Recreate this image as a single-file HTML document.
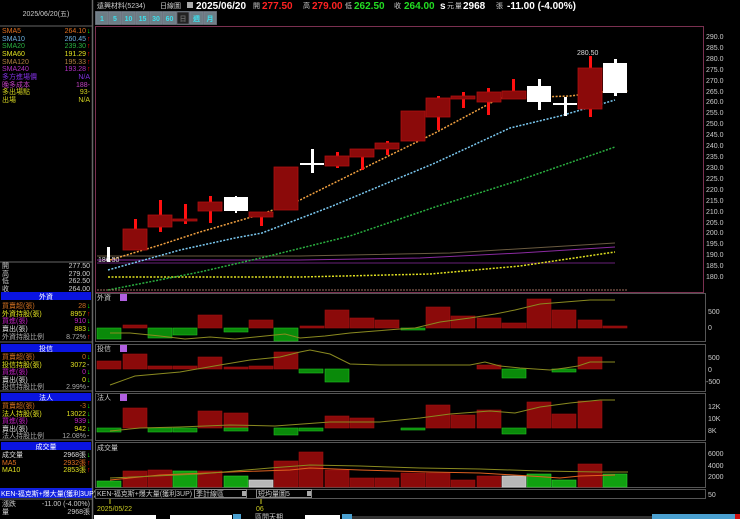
<!DOCTYPE html>
<html><head><meta charset="utf-8"><style>
html,body{margin:0;padding:0;background:#000;width:740px;height:519px;overflow:hidden}
svg{display:block}
text{font-family:"Liberation Sans","Noto Sans CJK TC",sans-serif;font-size:7px}
.b{font-weight:bold;font-size:10px}
</style></head><body>
<svg width="740" height="519" viewBox="0 0 740 519" xmlns="http://www.w3.org/2000/svg">
<rect width="740" height="519" fill="#000"/>
<!-- left panel -->
<line x1="92.5" y1="0" x2="92.5" y2="519" stroke="#666" stroke-width="1.5"/>
<line x1="0" y1="26" x2="92" y2="26" stroke="#666"/>
<text x="46" y="16" fill="#ccc" text-anchor="middle">2025/06/20(五)</text>
<g font-size="7">
<text x="2" y="33" fill="#e07020">SMA5</text><text x="86" y="33" fill="#e07020" text-anchor="end">264.10</text><text x="87" y="33" fill="#0f0">↓</text>
<text x="2" y="41" fill="#6cb0e0">SMA10</text><text x="86" y="41" fill="#6cb0e0" text-anchor="end">260.45</text><text x="87" y="41" fill="#f00">↑</text>
<text x="2" y="48" fill="#2ab040">SMA20</text><text x="86" y="48" fill="#2ab040" text-anchor="end">239.30</text><text x="87" y="48" fill="#f00">↑</text>
<text x="2" y="56" fill="#e0e020">SMA60</text><text x="86" y="56" fill="#e0e020" text-anchor="end">191.29</text><text x="87" y="56" fill="#f00">↑</text>
<text x="2" y="64" fill="#b08040">SMA120</text><text x="86" y="64" fill="#b08040" text-anchor="end">195.33</text><text x="87" y="64" fill="#f00">↑</text>
<text x="2" y="71" fill="#b030c0">SMA240</text><text x="86" y="71" fill="#b030c0" text-anchor="end">193.28</text><text x="87" y="71" fill="#f00">↑</text>
<text x="2" y="79" fill="#8030e0">多方進場價</text><text x="90" y="79" fill="#8030e0" text-anchor="end">N/A</text>
<text x="2" y="87" fill="#c040c0">晚多成本</text><text x="90" y="87" fill="#c040c0" text-anchor="end">188-</text>
<text x="2" y="94" fill="#d0d020">多出場點</text><text x="90" y="94" fill="#d0d020" text-anchor="end">93-</text>
<text x="2" y="102" fill="#d0d020">出場</text><text x="90" y="102" fill="#d0d020" text-anchor="end">N/A</text>
</g>
<line x1="0" y1="262" x2="92" y2="262" stroke="#666"/>
<g fill="#ccc">
<text x="2" y="268">開</text><text x="90" y="268" text-anchor="end">277.50</text>
<text x="2" y="276">高</text><text x="90" y="276" text-anchor="end">279.00</text>
<text x="2" y="283">低</text><text x="90" y="283" text-anchor="end">262.50</text>
<text x="2" y="291">收</text><text x="90" y="291" text-anchor="end">264.00</text>
</g>
<rect x="1" y="292" width="90" height="8" fill="#0a14e0"/><text x="46" y="299" fill="#fff" text-anchor="middle">外資</text>
<text x="2" y="308" fill="#d07020">買賣超(張)</text><text x="86" y="308" fill="#d07020" text-anchor="end">28</text><text x="87" y="308" fill="#0f0">↓</text>
<text x="2" y="316" fill="#e0e020">外資持股(張)</text><text x="86" y="316" fill="#e0e020" text-anchor="end">8957</text><text x="87" y="316" fill="#f00">↑</text>
<text x="2" y="323" fill="#c020c0">買進(張)</text><text x="86" y="323" fill="#c020c0" text-anchor="end">910</text><text x="87" y="323" fill="#0f0">↓</text>
<text x="2" y="331" fill="#ddd">賣出(張)</text><text x="86" y="331" fill="#e0e020" text-anchor="end">883</text><text x="87" y="331" fill="#0f0">↓</text>
<text x="2" y="339" fill="#aaa">外資持股比例</text><text x="86" y="339" fill="#aaa" text-anchor="end">8.72%</text><text x="87" y="339" fill="#f00">↑</text>
<line x1="0" y1="342" x2="92" y2="342" stroke="#666"/>
<rect x="1" y="344" width="90" height="8" fill="#0a14e0"/><text x="46" y="351" fill="#fff" text-anchor="middle">投信</text>
<text x="2" y="359" fill="#d07020">買賣超(張)</text><text x="86" y="359" fill="#d07020" text-anchor="end">0</text><text x="87" y="359" fill="#0f0">↓</text>
<text x="2" y="367" fill="#e0e020">投信持股(張)</text><text x="86" y="367" fill="#e0e020" text-anchor="end">3072</text><text x="87" y="367" fill="#ccc">-</text>
<text x="2" y="374" fill="#c020c0">買進(張)</text><text x="86" y="374" fill="#c020c0" text-anchor="end">0</text><text x="87" y="374" fill="#0f0">↓</text>
<text x="2" y="382" fill="#ddd">賣出(張)</text><text x="86" y="382" fill="#e0e020" text-anchor="end">0</text><text x="87" y="382" fill="#0f0">↓</text>
<text x="2" y="389" fill="#aaa">投信持股比例</text><text x="86" y="389" fill="#aaa" text-anchor="end">2.99%</text><text x="87" y="389" fill="#ccc">-</text>
<line x1="0" y1="391" x2="92" y2="391" stroke="#666"/>
<rect x="1" y="393" width="90" height="8" fill="#0a14e0"/><text x="46" y="400" fill="#fff" text-anchor="middle">法人</text>
<text x="2" y="408" fill="#d07020">買賣超(張)</text><text x="86" y="408" fill="#d07020" text-anchor="end">-3</text><text x="87" y="408" fill="#0f0">↓</text>
<text x="2" y="416" fill="#e0e020">法人持股(張)</text><text x="86" y="416" fill="#e0e020" text-anchor="end">13022</text><text x="87" y="416" fill="#0f0">↓</text>
<text x="2" y="423" fill="#c020c0">買進(張)</text><text x="86" y="423" fill="#c020c0" text-anchor="end">939</text><text x="87" y="423" fill="#0f0">↓</text>
<text x="2" y="431" fill="#ddd">賣出(張)</text><text x="86" y="431" fill="#e0e020" text-anchor="end">942</text><text x="87" y="431" fill="#0f0">↓</text>
<text x="2" y="438" fill="#aaa">法人持股比例</text><text x="86" y="438" fill="#aaa" text-anchor="end">12.08%</text><text x="87" y="438" fill="#ccc">-</text>
<line x1="0" y1="440" x2="92" y2="440" stroke="#666"/>
<rect x="1" y="442" width="90" height="8" fill="#0a14e0"/><text x="46" y="449" fill="#fff" text-anchor="middle">成交量</text>
<text x="2" y="457" fill="#ddd">成交量</text><text x="86" y="457" fill="#ddd" text-anchor="end">2968張</text><text x="87" y="457" fill="#0f0">↓</text>
<text x="2" y="465" fill="#e07020">MA5</text><text x="86" y="465" fill="#e07020" text-anchor="end">2932張</text><text x="87" y="465" fill="#f00">↑</text>
<text x="2" y="472" fill="#e0e020">MA10</text><text x="86" y="472" fill="#e0e020" text-anchor="end">2853張</text><text x="87" y="472" fill="#f00">↑</text>
<rect x="0" y="488" width="92" height="10" fill="#1020e0"/><text x="1" y="496" fill="#fff">KEN-福克斯+爆大量(獲利3UP)</text>
<line x1="0" y1="499" x2="92" y2="499" stroke="#666"/>
<text x="2" y="506" fill="#ccc">漲跌</text><text x="90" y="506" fill="#ccc" text-anchor="end">-11.00 (-4.00%)</text>
<text x="2" y="514" fill="#ccc">量</text><text x="90" y="514" fill="#ccc" text-anchor="end">2968張</text>

<!-- header -->
<text x="97" y="8" fill="#ccc">遠興材料(5234)</text>
<text x="160" y="8" fill="#ccc">日線圖</text>
<rect x="187" y="2" width="6" height="6" fill="#aaa"/>
<text x="196" y="9" class="b" fill="#fff">2025/06/20</text>
<text x="253" y="8" fill="#ccc">開</text><text x="262" y="9" class="b" fill="#f22">277.50</text>
<text x="303" y="8" fill="#ccc">高</text><text x="312" y="9" class="b" fill="#f22">279.00</text>
<text x="345" y="8" fill="#ccc">低</text><text x="354" y="9" class="b" fill="#2d2">262.50</text>
<text x="394" y="8" fill="#ccc">收</text><text x="404" y="9" class="b" fill="#2d2">264.00</text>
<text x="440" y="9" class="b" fill="#fff" font-size="8">s</text><text x="447" y="8" fill="#ccc">元</text>
<text x="455" y="8" fill="#ccc">量</text><text x="463" y="9" class="b" fill="#fff">2968</text>
<text x="496" y="8" fill="#ccc">張</text><text x="507" y="9" class="b" fill="#fff">-11.00 (-4.00%)</text>
<!-- buttons -->
<rect x="95" y="11" width="122" height="14" fill="#556066"/>
<g fill="#6c7c84" stroke="#889" stroke-width="0.5">
<rect x="96" y="12" width="12" height="12"/><rect x="109" y="12" width="12" height="12"/><rect x="122" y="12" width="13" height="12"/><rect x="136" y="12" width="13" height="12"/><rect x="150" y="12" width="12" height="12"/><rect x="163" y="12" width="13" height="12"/><rect x="177" y="12" width="12" height="12" fill="#222"/><rect x="190" y="12" width="13" height="12"/><rect x="204" y="12" width="12" height="12"/>
</g>
<g fill="#3ee0ee" font-size="7" text-anchor="middle" font-weight="bold">
<text x="102" y="21">1</text><text x="115" y="21">5</text><text x="128.5" y="21">10</text><text x="142.5" y="21">15</text><text x="156" y="21">30</text><text x="169.5" y="21">60</text><text x="183" y="21" fill="#666">日</text><text x="196.5" y="21">週</text><text x="210" y="21">月</text>
</g>

<!-- main chart frame -->
<rect x="95.5" y="26.5" width="608" height="266" fill="none" stroke="#7a3050"/>
<g fill="#ccc" font-size="7.5">
<text x="706" y="39">290.0</text><text x="706" y="50">285.0</text><text x="706" y="61">280.0</text><text x="706" y="72">275.0</text><text x="706" y="83">270.0</text><text x="706" y="94">265.0</text><text x="706" y="104">260.0</text><text x="706" y="115">255.0</text><text x="706" y="126">250.0</text><text x="706" y="137">245.0</text><text x="706" y="148">240.0</text><text x="706" y="159">235.0</text><text x="706" y="170">230.0</text><text x="706" y="181">225.0</text><text x="706" y="192">220.0</text><text x="706" y="203">215.0</text><text x="706" y="214">210.0</text><text x="706" y="225">205.0</text><text x="706" y="235">200.0</text><text x="706" y="246">195.0</text><text x="706" y="257">190.0</text><text x="706" y="268">185.0</text><text x="706" y="279">180.0</text>
</g>
<!-- long MAs -->
<polyline points="97,256 300,256 450,253 615,243" fill="none" stroke="#6a5a40" stroke-width="1"/>
<polyline points="97,260 300,260 420,258 520,253 615,247" fill="none" stroke="#8a2aa0" stroke-width="1"/>
<polyline points="97,263 615,263" fill="none" stroke="#8a2aa0" stroke-width="0.8"/>
<polyline points="108,277 300,277 430,274 520,266 615,252" fill="none" stroke="#e0e020" stroke-width="1.5" stroke-dasharray="2,1.5"/>
<polyline points="108,290 200,272 265,257 350,236 435,207 520,180 615,147" fill="none" stroke="#2ab040" stroke-width="1.5" stroke-dasharray="2,1.5"/>
<polyline points="108,270 180,250 235,238 262,233 330,207 435,163 510,128 560,116 615,100" fill="none" stroke="#7ac8f0" stroke-width="1.5" stroke-dasharray="2,1.5"/>
<polyline points="110,260 160,245 200,232 262,214 300,200 360,170 435,133 500,98 540,97 570,96 600,92 628,91" fill="none" stroke="#f0a040" stroke-width="1.5" stroke-dasharray="2,1.5"/>
<line x1="97" y1="290" x2="628" y2="290" stroke="#a07060" stroke-width="1" stroke-dasharray="2,1"/>
<!-- candles -->
<g fill="#ff1010">
<rect x="134" y="219" width="3" height="31"/><rect x="159" y="200" width="3" height="32"/><rect x="184" y="204" width="3" height="20"/><rect x="209" y="196" width="3" height="27"/><rect x="260" y="212" width="3" height="14"/><rect x="336" y="152" width="3" height="16"/><rect x="361" y="149" width="3" height="21"/><rect x="386" y="141" width="3" height="14"/><rect x="437" y="96" width="3" height="34"/><rect x="462" y="92" width="3" height="16"/><rect x="487" y="88" width="3" height="27"/><rect x="512" y="79" width="3" height="20"/><rect x="589" y="56" width="3" height="61"/>
</g>
<g fill="#8b0a0a" stroke="#b01010" stroke-width="0.8">
<rect x="123" y="229" width="24" height="21"/><rect x="148" y="215" width="24" height="12"/><rect x="173" y="219" width="24" height="2"/><rect x="198" y="202" width="24" height="9"/><rect x="249" y="212" width="24" height="5"/><rect x="274" y="167" width="24" height="43"/><rect x="325" y="156" width="24" height="10"/><rect x="350" y="149" width="24" height="8"/><rect x="375" y="143" width="24" height="6"/><rect x="401" y="111" width="24" height="30"/><rect x="426" y="98" width="24" height="19"/><rect x="451" y="96" width="24" height="3"/><rect x="477" y="92" width="24" height="10"/><rect x="502" y="91" width="24" height="8"/><rect x="578" y="68" width="24" height="41"/>
</g>
<g fill="#fff">
<rect x="107" y="247" width="3" height="15"/>
<rect x="224" y="197" width="24" height="14"/><rect x="235" y="196" width="2" height="17"/>
<rect x="300" y="163" width="24" height="2"/><rect x="311" y="149" width="3" height="24"/>
<rect x="527" y="86" width="24" height="16"/><rect x="538" y="79" width="3" height="31"/>
<rect x="553" y="103" width="24" height="2"/><rect x="564" y="97" width="3" height="19"/>
<rect x="603" y="63" width="24" height="30"/><rect x="614" y="59" width="3" height="37"/>
</g>
<text x="577" y="55" fill="#ddd" font-size="7.5">280.50</text>
<text x="98" y="262" fill="#ddd" font-size="7.5">186.50</text>

<!-- sub panel frames -->
<g fill="none" stroke="#555">
<rect x="95.5" y="293.5" width="610" height="48"/>
<rect x="95.5" y="344.5" width="610" height="47"/>
<rect x="95.5" y="393.5" width="610" height="47"/>
<rect x="95.5" y="442.5" width="610" height="45"/>
<rect x="95.5" y="489.5" width="610" height="9"/>
</g>
<g fill="#ccc">
<text x="97" y="300">外資</text><text x="97" y="351">投信</text><text x="97" y="400">法人</text><text x="97" y="450">成交量</text>
</g>
<g fill="#b060e0"><rect x="120" y="294" width="7" height="7"/><rect x="120" y="345" width="7" height="7"/><rect x="120" y="394" width="7" height="7"/></g>
<g fill="#ccc" font-size="7.5">
<text x="708" y="314">500</text><text x="708" y="330">0</text>
<text x="708" y="360">500</text><text x="708" y="372">0</text><text x="706" y="384">-500</text>
<text x="708" y="409">12K</text><text x="708" y="421">10K</text><text x="708" y="433">8K</text>
<text x="708" y="456">6000</text><text x="708" y="468">4000</text><text x="708" y="479">2000</text>
<text x="708" y="497">50</text>
</g>
<!-- 外資 -->
<g fill="#8b0a0a" stroke="#a01010" stroke-width="0.6">
<rect x="123" y="325" width="24" height="3"/><rect x="198" y="315" width="24" height="13"/><rect x="249" y="320" width="24" height="8"/><rect x="300" y="326" width="24" height="2"/><rect x="325" y="310" width="24" height="18"/><rect x="350" y="318" width="24" height="10"/><rect x="375" y="320" width="24" height="8"/><rect x="426" y="307" width="24" height="21"/><rect x="451" y="316" width="24" height="12"/><rect x="477" y="318" width="24" height="10"/><rect x="502" y="323" width="24" height="5"/><rect x="527" y="299" width="24" height="29"/><rect x="552" y="310" width="24" height="18"/><rect x="578" y="320" width="24" height="8"/><rect x="603" y="326" width="24" height="2"/>
</g>
<g fill="#0a8a0a" stroke="#20c020" stroke-width="0.6">
<rect x="97" y="328" width="24" height="11"/><rect x="148" y="328" width="24" height="10"/><rect x="173" y="328" width="24" height="7"/><rect x="224" y="328" width="24" height="4"/><rect x="274" y="328" width="24" height="13"/><rect x="401" y="328" width="24" height="2"/>
</g>
<polyline points="110,333 130,333 160,336 185,339 210,337 235,339 265,336 285,334 300,338 325,336 350,333 375,331 400,329 415,328 440,322 470,318 495,314 515,310 540,304 565,302 590,300 615,300" fill="none" stroke="#8a8a20" stroke-width="1"/>
<!-- 投信 -->
<g fill="#8b0a0a" stroke="#a01010" stroke-width="0.6">
<rect x="97" y="361" width="24" height="8"/><rect x="123" y="354" width="24" height="15"/><rect x="148" y="366" width="24" height="3"/><rect x="173" y="366" width="24" height="3"/><rect x="198" y="357" width="24" height="12"/><rect x="224" y="367" width="24" height="2"/><rect x="249" y="366" width="24" height="3"/><rect x="274" y="352" width="24" height="17"/><rect x="477" y="365" width="24" height="4"/><rect x="578" y="357" width="24" height="12"/>
</g>
<g fill="#0a8a0a" stroke="#20c020" stroke-width="0.6">
<rect x="299" y="369" width="24" height="4"/><rect x="325" y="369" width="24" height="13"/><rect x="502" y="369" width="24" height="9"/><rect x="552" y="369" width="24" height="3"/>
</g>
<polyline points="110,385 135,376 180,372 220,365 250,360 280,357 300,352 310,350 330,354 350,364 380,365 470,365 485,362 500,366 520,368 550,370 565,368 578,366 590,362 615,362" fill="none" stroke="#8a8a20" stroke-width="1"/>
<!-- 法人 -->
<g fill="#8b0a0a" stroke="#a01010" stroke-width="0.6">
<rect x="123" y="408" width="24" height="20"/><rect x="198" y="411" width="24" height="17"/><rect x="224" y="413" width="24" height="15"/><rect x="325" y="416" width="24" height="12"/><rect x="350" y="418" width="24" height="10"/><rect x="426" y="405" width="24" height="23"/><rect x="451" y="415" width="24" height="13"/><rect x="477" y="410" width="24" height="18"/><rect x="527" y="402" width="24" height="26"/><rect x="552" y="414" width="24" height="14"/><rect x="578" y="401" width="24" height="27"/>
</g>
<g fill="#0a8a0a" stroke="#20c020" stroke-width="0.6">
<rect x="97" y="428" width="24" height="4"/><rect x="148" y="428" width="24" height="4"/><rect x="173" y="428" width="24" height="4"/><rect x="224" y="428" width="24" height="3"/><rect x="274" y="428" width="24" height="7"/><rect x="299" y="428" width="24" height="3"/><rect x="401" y="428" width="24" height="2"/><rect x="502" y="428" width="24" height="6"/>
</g>
<polyline points="110,431 140,428 180,427 230,425 275,426 330,422 380,422 420,418 450,414 490,411 515,413 540,407 570,403 600,400 615,400" fill="none" stroke="#8a8a20" stroke-width="1"/>
<!-- 成交量 -->
<g fill="#8b0a0a" stroke="#a01010" stroke-width="0.6">
<rect x="123" y="471" width="24" height="16"/><rect x="148" y="470" width="24" height="17"/><rect x="198" y="471" width="24" height="16"/><rect x="274" y="461" width="24" height="26"/><rect x="299" y="452" width="24" height="35"/><rect x="325" y="470" width="24" height="17"/><rect x="350" y="478" width="24" height="9"/><rect x="375" y="478" width="24" height="9"/><rect x="401" y="473" width="24" height="14"/><rect x="426" y="473" width="24" height="14"/><rect x="451" y="480" width="24" height="7"/><rect x="477" y="476" width="24" height="11"/><rect x="578" y="464" width="24" height="23"/>
</g>
<g fill="#10a010" stroke="#30d030" stroke-width="0.6">
<rect x="97" y="481" width="24" height="6"/><rect x="173" y="471" width="24" height="16"/><rect x="224" y="476" width="24" height="11"/><rect x="527" y="474" width="24" height="13"/><rect x="552" y="480" width="24" height="7"/><rect x="603" y="474" width="24" height="13"/>
</g>
<g fill="#b8b8b8" stroke="#ddd" stroke-width="0.6"><rect x="249" y="480" width="24" height="7"/><rect x="502" y="476" width="24" height="11"/></g>
<polyline points="110,480 160,475 230,472 290,470 310,468 360,470 430,472 480,473 530,476 560,478 580,476 615,475" fill="none" stroke="#e06020" stroke-width="1"/>
<polyline points="110,478 200,474 270,468 310,465 360,466 420,468 480,469 540,471 600,472 628,472" fill="none" stroke="#8a8a20" stroke-width="1"/>
<!-- selector row -->
<text x="97" y="496" fill="#ccc">KEN-福克斯+爆大量(獲利3UP)</text>
<rect x="194.5" y="489.5" width="52" height="8" fill="#000" stroke="#888"/><text x="196" y="496" fill="#ccc">季計線區</text><rect x="242" y="491" width="4" height="5" fill="#aaa"/>
<rect x="256.5" y="489.5" width="55" height="8" fill="#000" stroke="#888"/><text x="258" y="496" fill="#ccc">短均量圖5</text><rect x="307" y="491" width="4" height="5" fill="#aaa"/>
<!-- bottom -->
<line x1="110" y1="499" x2="110" y2="504" stroke="#cc2"/><text x="97" y="511" fill="#cc2" font-size="8">2025/05/22</text>
<line x1="261" y1="499" x2="261" y2="504" stroke="#cc2"/><text x="256" y="511" fill="#cc2" font-size="8">06</text>
<rect x="94" y="515" width="62" height="4" fill="#fff"/><rect x="170" y="515" width="62" height="4" fill="#fff"/>
<rect x="233" y="514" width="8" height="5" fill="#4aa0d0"/>
<text x="255" y="519" fill="#ccc">區間天期</text>
<rect x="305" y="515" width="35" height="4" fill="#fff"/><rect x="342" y="514" width="10" height="5" fill="#4aa0d0"/>
<rect x="352" y="516" width="300" height="3" fill="#333"/>
<rect x="652" y="514" width="88" height="5" fill="#4aa0d0"/><rect x="735" y="514" width="5" height="5" fill="#d01010"/>
</svg>
</body></html>
